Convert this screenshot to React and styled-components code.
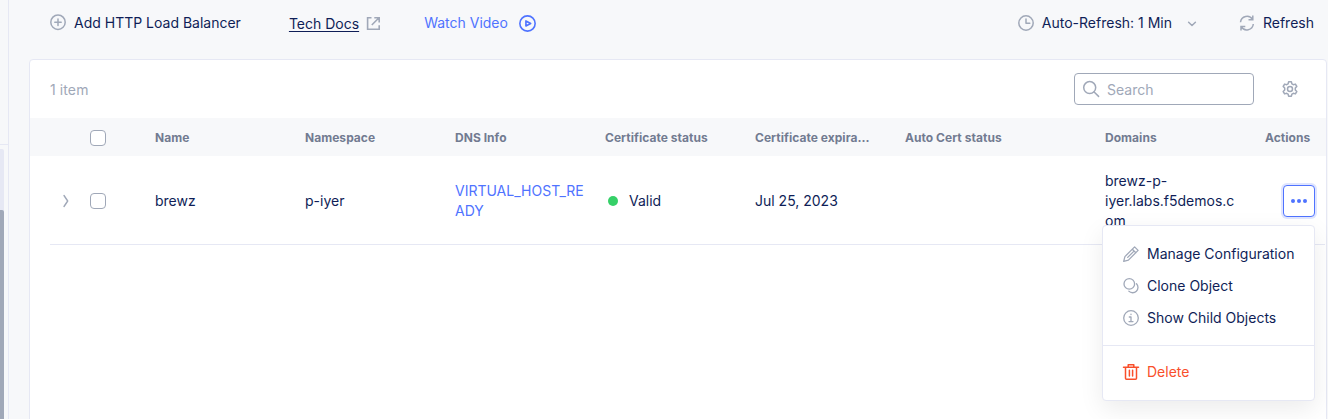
import React from "react";
import styled, { createGlobalStyle } from "styled-components";

const c = {
  page: "#f7f8fa",
  line: "#e6e8f4",
  navy: "#0f1e57",
  grey: "#a0a8b8",
  head: "#727b91",
  blue: "#4f73ff",
  red: "#f94f2b",
};

const GlobalStyle = createGlobalStyle`
  * { box-sizing: border-box; }
  html, body { margin: 0; background: ${c.page}; overflow: hidden; }
  body, button, input { font: 400 14px/20px Inter, "Liberation Sans", sans-serif; color: ${c.navy}; }
`;

const Shell = styled.div`
  display: flex;
  width: 1328px;
  height: 419px;
  overflow: hidden;
`;

const SideRail = styled.aside`
  flex: none;
  width: 9px;
  border-right: 1px solid ${c.line};
  padding-top: 144px;
`;

const RailScroll = styled.div`
  height: 275px;
  border-top: 1px solid ${c.line};
  padding-top: 4px;
`;

const Track = styled.div`
  width: 4px;
  height: 270px;
  padding-top: 61px;
  background: ${c.line};
  border-top-right-radius: 2px;
`;

const Thumb = styled.div`
  height: 209px;
  background: ${c.grey};
  border-top-right-radius: 2px;
`;

const Main = styled.main`
  flex: none;
  width: 1318px;
  padding-left: 20px;
`;

const Toolbar = styled.header`
  display: flex;
  justify-content: space-between;
  height: 59px;
  padding: 13px 13px 0 21px;
`;

const ToolGroup = styled.div`
  display: flex;
  align-items: flex-start;
  gap: ${(p) => p.$gap}px;
`;

const ToolButton = styled.button`
  display: flex;
  align-items: center;
  gap: ${(p) => p.$gap || 8}px;
  height: 20px;
  padding: 0;
  margin: ${(p) => p.$drop || 0}px ${(p) => p.$pull || 0}px 0 0;
  border: 0;
  background: none;
  color: ${(p) => p.$color || c.navy};
  white-space: nowrap;
`;

const Underlined = styled.span`
  text-decoration: underline;
  text-underline-offset: 2px;
`;

const Interval = styled.span`
  margin-right: 8px;
`;

const Glyph = styled.svg`
  flex: none;
  display: block;
  overflow: visible;
  fill: none;
  stroke: ${(p) => p.$color || c.grey};
  stroke-width: ${(p) => p.$weight || 1.5};
  stroke-linecap: ${(p) => (p.$square ? "butt" : "round")};
  stroke-linejoin: ${(p) => (p.$square ? "miter" : "round")};
`;

const Panel = styled.section`
  width: 1298px;
  height: 380px;
  background: #fff;
  border: 1px solid ${c.line};
  border-radius: 4px;
`;

const PanelTop = styled.div`
  display: flex;
  align-items: center;
  height: 58px;
  padding: 0 28px 0 20px;
`;

const Count = styled.span`
  flex: 1;
  color: ${c.grey};
  padding-top: 2px;
  letter-spacing: 0.1px;
`;

const SearchBox = styled.label`
  display: flex;
  align-items: center;
  gap: 8px;
  width: 180px;
  height: 32px;
  margin-right: 28px;
  padding-left: 8px;
  border: 1px solid ${c.grey};
  border-radius: 4px;
`;

const SearchInput = styled.input`
  width: 130px;
  padding: 2px 0 0;
  border: 0;
  outline: 0;
  background: none;
  &::placeholder { color: ${c.grey}; opacity: 1; }
`;

const Grid = styled.div`
  display: grid;
  grid-template-columns: 40px 65px 150px 150px 150px 150px 150px 200px 138px 1fr;
  align-items: center;
`;

const HeadRow = styled(Grid)`
  height: 38px;
  padding: 2px 0 0 20px;
  background: ${c.page};
  color: ${c.head};
  font-size: 12px;
  font-weight: 700;
  letter-spacing: 0.04px;
`;

const BodyRow = styled(Grid)`
  height: 89px;
  padding-top: 2px;
  margin: 0 1px 0 20px;
  border-bottom: 1px solid ${c.line};
`;

const Cell = styled.div`
  padding-right: ${(p) => p.$pad ?? 18}px;
  color: ${(p) => p.$color || "inherit"};
  overflow-wrap: anywhere;
`;

const HeadCell = styled.div`
  white-space: nowrap;
`;

const ActionsHead = styled(HeadCell)`
  margin-left: 22px;
`;

const Checkbox = styled.span`
  display: block;
  width: 16px;
  height: 16px;
  border: 1px solid ${c.grey};
  border-radius: 4px;
  background: #fff;
`;

const Expander = styled.span`
  padding-left: 12px;
`;

const Status = styled.span`
  display: flex;
  align-items: center;
  gap: 11px;
  padding-left: 3px;
`;

const Dot = styled.i`
  width: 10px;
  height: 10px;
  border-radius: 50%;
  background: #35d068;
`;

const ActionSlot = styled.div`
  position: relative;
  justify-self: end;
  margin-right: 10px;
`;

const MoreButton = styled.button`
  display: grid;
  place-items: center;
  width: 32px;
  height: 32px;
  padding: 0;
  border: 1px solid ${c.blue};
  border-radius: 4px;
  background: #fff;
  box-shadow: 0 0 0 2px #dfe5ff;
`;

const Menu = styled.div`
  position: absolute;
  top: 40px;
  right: 0;
  width: 213px;
  height: 176px;
  padding-top: 12px;
  border: 1px solid ${c.line};
  border-radius: 4px;
  background: #fff;
  box-shadow: 0 8px 24px rgba(0, 0, 0, 0.08);
`;

const MenuItem = styled.div`
  display: flex;
  align-items: center;
  gap: 8px;
  height: 32px;
  padding-left: 20px;
  color: ${(p) => p.$color || c.navy};
  white-space: nowrap;
`;

const MenuDivider = styled.div`
  height: 1px;
  margin: 11px 0 10px;
  background: ${c.line};
`;

const Icon = ({ children, size = 16, ...rest }) => (
  <Glyph width={size} height={size} viewBox="0 0 16 16" {...rest}>
    {children}
  </Glyph>
);

const PlusIcon = () => (
  <Icon><circle cx="8" cy="7.2" r="7.2" /><path d="M8 4v6.400M4.800 7.200h6.400" /></Icon>
);
const ExternalIcon = () => (
  <Icon $square $weight={1.6}><path d="M6.500 1.700H2.600v11.600h11.600V9.300M6.800 9 14 1.800M9.300 1.700h4.900v4.900" /></Icon>
);
const PlayIcon = () => (
  <Icon size={17} $color={c.blue} $weight={1.5}><circle cx="8" cy="8" r="7.200" /><path d="M6.500 5.600v4.800L11 8z" /></Icon>
);
const ClockIcon = () => (
  <Icon><circle cx="8" cy="8" r="7.200" /><path d="M8 4V8.200h3.800" /></Icon>
);
const RefreshIcon = () => (
  <Icon $square><path d="M13.800.6v4.200H9.500M13.600 4.600A6.500 6.500 0 0 0 1.500 7.200M2 15.600v-4.200h4.300M2.200 11.600A6.500 6.500 0 0 0 14.300 9" /></Icon>
);
const SearchIcon = () => (
  <Icon $weight={1.500}><circle cx="6.700" cy="6.600" r="6" /><path d="m11.100 11 4.500 4.400" /></Icon>
);
const GearIcon = () => (
  <Icon $weight={1.500}>
    <path d="M6.600.8h2.800l.5 2.100 1.400.8 2.100-.6 1.400 2.400-1.500 1.600v1.800l1.500 1.600-1.400 2.400-2.100-.6-1.400.8-.5 2.100H6.600l-.5-2.100-1.400-.8-2.100.6-1.400-2.400 1.500-1.600V7.100L1.200 5.500l1.400-2.400 2.100.6 1.400-.8z" />
    <circle cx="8" cy="8" r="2.500" />
  </Icon>
);
const ChevronDown = () => (
  <Glyph width="8" height="5" viewBox="0 0 8 5"><path d="m.6 1.200 3.400 3.300 3.400-3.300" /></Glyph>
);
const ChevronRight = () => (
  <Glyph width="8" height="14" viewBox="0 0 8 14" $weight={1.400}><path d="m2 1.500 3.700 5.500L2 12.500" /></Glyph>
);
const DotsIcon = () => (
  <svg width="16" height="4" viewBox="0 0 16 4" fill={c.blue}>
    <circle cx="2" cy="2" r="2" /><circle cx="8" cy="2" r="2" /><circle cx="14" cy="2" r="2" />
  </svg>
);
const PencilIcon = () => (
  <Icon $weight={1.300}><path d="M.7 15.300 1.900 10.600 11.600.9l3.500 3.500-9.700 9.700zM9.300 3.200l3.500 3.500M11 5.100l-6.300 6.300" /></Icon>
);
const CloneIcon = () => (
  <Icon $weight={1.300}><circle cx="6.300" cy="5.900" r="5.300" /><path d="M13.500 5.700a5.200 5.200 0 1 1-7.700 7.400" /></Icon>
);
const InfoIcon = () => (
  <Icon $weight={1.300}><circle cx="8" cy="8" r="7.300" /><path d="M6.300 7H8v4.600M6 11.600h4M8 4.200v.3" /></Icon>
);
const TrashIcon = () => (
  <Icon $color={c.red} $weight={1.500}><path d="M.5 3.300h15M2.500 3.300v11q0 1 1 1h9q1 0 1-1v-11M5.200 3.300V.8h5.600v2.500M6.400 6.300v5.700M9.600 6.300v5.700" /></Icon>
);

const headings = ["Name", "Namespace", "DNS Info", "Certificate status", "Certificate expira...", "Auto Cert status", "Domains"];

export default function App() {
  return (
    <Shell>
      <GlobalStyle />
      <SideRail>
        <RailScroll><Track><Thumb /></Track></RailScroll>
      </SideRail>
      <Main>
        <Toolbar>
          <ToolGroup $gap={48}>
            <ToolButton><PlusIcon />Add HTTP Load Balancer</ToolButton>
            <ToolButton $gap={6} $drop={1} $pull={-5}><Underlined>Tech Docs</Underlined><ExternalIcon /></ToolButton>
            <ToolButton $gap={11} $color={c.blue}>Watch Video<PlayIcon /></ToolButton>
          </ToolGroup>
          <ToolGroup $gap={43}>
            <ToolButton><ClockIcon /><Interval>Auto-Refresh: 1 Min</Interval><ChevronDown /></ToolButton>
            <ToolButton><RefreshIcon />Refresh</ToolButton>
          </ToolGroup>
        </Toolbar>
        <Panel>
          <PanelTop>
            <Count>1 item</Count>
            <SearchBox><SearchIcon /><SearchInput placeholder="Search" /></SearchBox>
            <GearIcon />
          </PanelTop>
          <HeadRow>
            <span />
            <Checkbox />
            {headings.map((h) => <HeadCell key={h}>{h}</HeadCell>)}
            <ActionsHead>Actions</ActionsHead>
          </HeadRow>
          <BodyRow>
            <Expander><ChevronRight /></Expander>
            <Checkbox />
            <Cell>brewz</Cell>
            <Cell>p-iyer</Cell>
            <Cell $color={c.blue}>VIRTUAL_HOST_READY</Cell>
            <Cell><Status><Dot />Valid</Status></Cell>
            <Cell>Jul 25, 2023</Cell>
            <Cell />
            <Cell $pad={6}>brewz-p-iyer.labs.f5demos.com</Cell>
            <ActionSlot>
              <MoreButton><DotsIcon /></MoreButton>
              <Menu>
                <MenuItem><PencilIcon />Manage Configuration</MenuItem>
                <MenuItem><CloneIcon />Clone Object</MenuItem>
                <MenuItem><InfoIcon />Show Child Objects</MenuItem>
                <MenuDivider />
                <MenuItem $color={c.red}><TrashIcon />Delete</MenuItem>
              </Menu>
            </ActionSlot>
          </BodyRow>
        </Panel>
      </Main>
    </Shell>
  );
}
